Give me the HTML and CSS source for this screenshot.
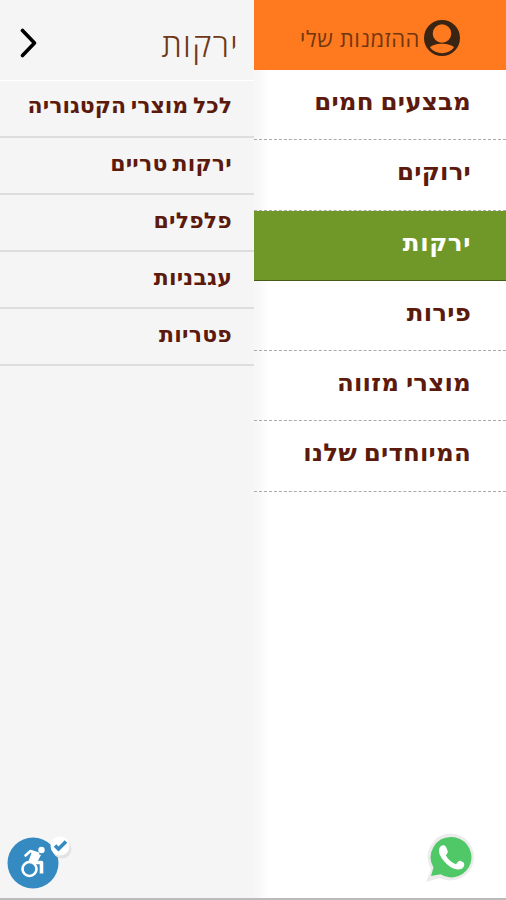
FILE: index.html
```
<!DOCTYPE html>
<html lang="he" dir="rtl">
<head>
  <meta charset="UTF-8">
  <meta name="viewport" content="width=device-width, initial-scale=1">
  <title>ירקות</title>
  <link rel="stylesheet" href="styles.css">
</head>
<body>
  <div class="menu">
    <nav class="main-menu">
      <a class="my-orders" href="#">
        <svg class="user-icon" viewBox="0 0 36 36">
          <circle cx="18" cy="18" r="18" fill="#3a2413"/>
          <circle cx="18" cy="13.5" r="9.3" fill="#ff7a1f"/>
          <path d="M6 27.500C10 22.500 26 22.500 30 27.500C24 35 12 35 6 27.500Z" fill="#ff7a1f"/>
        </svg>
        <span>ההזמנות שלי</span>
      </a>
      <ul class="categories">
        <li><a href="#">מבצעים חמים</a></li>
        <li><a href="#">ירוקים</a></li>
        <li class="active"><a href="#">ירקות</a></li>
        <li><a href="#">פירות</a></li>
        <li><a href="#">מוצרי מזווה</a></li>
        <li><a href="#">המיוחדים שלנו</a></li>
      </ul>
    </nav>
    <nav class="sub-menu">
      <div class="sub-header">
        <h2>ירקות</h2>
        <svg class="arrow" viewBox="0 0 18 30">
          <path d="M2.500 2.500L14.500 15L2.500 27.500" fill="none" stroke="#000" stroke-width="3.600" stroke-linecap="round" stroke-linejoin="round"/>
        </svg>
      </div>
      <ul class="sub-categories">
        <li><a href="#">לכל מוצרי הקטגוריה</a></li>
        <li><a href="#">ירקות טריים</a></li>
        <li><a href="#">פלפלים</a></li>
        <li><a href="#">עגבניות</a></li>
        <li><a href="#">פטריות</a></li>
      </ul>
    </nav>
  </div>

  <a class="accessibility" href="#">
    <svg viewBox="0 0 66 54">
      <circle cx="26" cy="27" r="25.500" fill="#348ac1"/>
      <circle cx="55" cy="13" r="9.500" fill="#e3e3e3"/>
      <circle cx="53" cy="10" r="9.500" fill="#fff"/>
      <path d="M48 9.500L51.500 13L59 5.500" fill="none" stroke="#348ac1" stroke-width="3.600"/>
      <g fill="none" stroke="#fff" stroke-width="2.600" stroke-linejoin="round">
        <circle cx="22.500" cy="33" r="7"/>
        <path d="M18.500 19.500L23.500 15L31 17.500" stroke-linecap="round"/>
        <path d="M26 26.500H34.500V37.500" stroke-width="3.600"/>
      </g>
      <path d="M25 15.500L34 19L30 26.500L21 26.500Z" fill="#fff"/>
      <circle cx="34.500" cy="14" r="3.200" fill="#fff"/>
    </svg>
  </a>
  <a class="whatsapp" href="#">
    <svg viewBox="0 0 52 52">
      <path d="M27 1.500A23.500 23.500 0 0 0 7 37L2 50L16 46A23.500 23.500 0 1 0 27 1.500Z" fill="#ececec"/>
      <path d="M27 5A20.200 20.200 0 0 0 9.500 35.500L7 44L16.500 42.300A20.200 20.200 0 1 0 27 5Z" fill="#50c867"/>
      <path d="M17 14C19 12.500 21 13 22 15L23.700 19C24.200 20.500 23 22 21.800 23.300C24 27.500 27.500 30.500 32 32.200L34.500 29.300C35 28.700 36 28.600 37 29L39.500 30.500C40.500 31.500 40.500 33.500 39.500 35C36.500 39 31 37.500 26.500 35C21.500 31.500 17.500 27 15.500 22C14.300 18.500 15 16 17 14Z" fill="#fff"/>
    </svg>
  </a>
</body>
</html>
```
FILE: styles.css
```
* {
  box-sizing: border-box;
}
body {
  margin: 0;
  font-family: 'Open Sans', 'Liberation Sans', sans-serif;
  background-color: #fff;
  color: #5c1a0c;
}
a {
  color: inherit;
  text-decoration: none;
}
ul {
  list-style: none;
  margin: 0;
  padding: 0;
}
.menu {
  display: flex;
  height: 100vh;
  border-bottom: 2px solid #bbb;
}
.main-menu {
  width: 252px;
  background: linear-gradient(to right, #f7f7f7 4px, #fff 14px);
}
.my-orders {
  display: flex;
  align-items: center;
  gap: 4px;
  height: 70px;
  padding: 6px 46px 0 0;
  background-color: #ff7a1f;
  color: #70370f;
  font-size: 22px;
  font-weight: 400;
  letter-spacing: 0.6px;
}
.user-icon {
  width: 36px;
  height: 36px;
}
.categories li {
  height: 70.300px;
  padding-right: 35px;
  border-bottom: 1px dashed #aaa;
  font-family: 'DejaVu Sans', 'Open Sans', sans-serif;
  font-size: 24.500px;
  font-weight: 700;
  letter-spacing: 0.200px;
  word-spacing: -2px;
  line-height: 63px;
}
.categories .active {
  background-color: #709829;
  border-bottom: 1px solid #435d18;
  color: #fff;
  letter-spacing: 0.600px;
}
.sub-menu {
  width: 254px;
  background-color: #f5f5f5;
}
.sub-header {
  display: flex;
  justify-content: space-between;
  align-items: center;
  height: 81px;
  padding: 5px 15px 0 20px;
  border-bottom: 1px solid #fff;
}
.sub-header h2 {
  margin: 4px 0 0;
  color: #703817;
  font-size: 33px;
  font-weight: 350;
  letter-spacing: 1.300px;
}
.arrow {
  width: 18px;
  height: 30px;
}
.sub-categories li {
  height: 57px;
  padding-right: 22px;
  border-bottom: 2px solid #dedede;
  font-family: 'DejaVu Sans', 'Open Sans', sans-serif;
  font-size: 22px;
  font-weight: 700;
  letter-spacing: 0.200px;
  word-spacing: -3px;
  line-height: 52px;
}
.sub-categories li:first-child {
  letter-spacing: 0;
  line-height: 49px;
}
.accessibility {
  position: fixed;
  left: 7px;
  bottom: 10px;
  width: 66px;
  height: 54px;
}
.whatsapp {
  position: fixed;
  right: 30px;
  bottom: 16px;
  width: 52px;
  height: 52px;
}
```
